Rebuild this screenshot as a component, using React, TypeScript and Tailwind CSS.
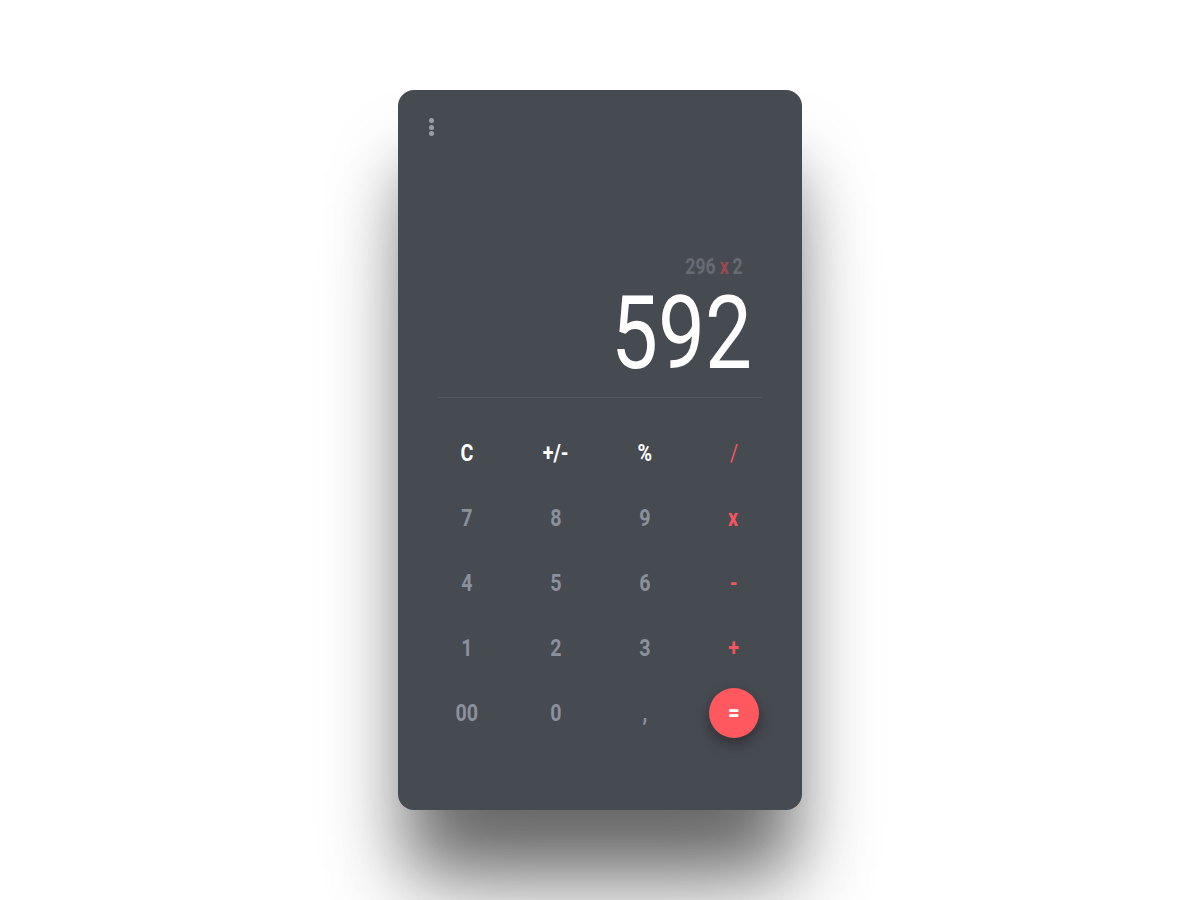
const keys = [
  { label: "C", tone: "white" },
  { label: "+/-", tone: "white" },
  { label: "%", tone: "white" },
  { label: "/", tone: "redThin" },
  { label: "7", tone: "gray" },
  { label: "8", tone: "gray" },
  { label: "9", tone: "gray" },
  { label: "x", tone: "red" },
  { label: "4", tone: "gray" },
  { label: "5", tone: "gray" },
  { label: "6", tone: "gray" },
  { label: "-", tone: "red" },
  { label: "1", tone: "gray" },
  { label: "2", tone: "gray" },
  { label: "3", tone: "gray" },
  { label: "+", tone: "red" },
  { label: "00", tone: "gray" },
  { label: "0", tone: "gray" },
  { label: ",", tone: "gray" },
  { label: "=", tone: "equals" },
];

const toneClass: Record<string, string> = {
  white: "text-white font-bold",
  gray: "text-[#8b919b] font-bold",
  red: "text-[#f5565d] font-bold",
  redThin: "text-[#f5565d] font-normal",
};

export default function App() {
  return (
    <div className="min-h-screen w-full bg-white flex items-center justify-center font-['Roboto','Liberation_Sans',sans-serif]">
      <div className="w-[404px] h-[720px] bg-[#464a51] rounded-[16px] shadow-[0_70px_70px_-10px_rgba(0,0,0,0.5),0_100px_100px_-20px_rgba(0,0,0,0.2)] flex flex-col pt-[28px]">
        <div className="pl-[31px] flex flex-col gap-[1.5px]">
          <span className="w-[5px] h-[5px] rounded-full bg-[#9a9ea5]" />
          <span className="w-[5px] h-[5px] rounded-full bg-[#9a9ea5]" />
          <span className="w-[5px] h-[5px] rounded-full bg-[#9a9ea5]" />
        </div>

        <div className="mt-[120px] flex flex-col items-end">
          <div className="mr-[59px] flex gap-[5px] text-[22px] leading-none font-bold text-[#676b72] scale-x-[0.8] origin-right">
            <span>296</span>
            <span className="text-[#9b4a50]">x</span>
            <span>2</span>
          </div>
          <div className="mt-[4px] mr-[50px] text-[102px] leading-none text-white scale-x-[0.82] origin-right">
            592
          </div>
        </div>

        <div className="mt-[13px] mx-[39px] h-px bg-[#53575e]" />

        <div className="mt-[22px] px-[24px] grid grid-cols-4">
          {keys.map((k) => (
            <div key={k.label} className="h-[65px] flex items-center justify-center">
              {k.tone === "equals" ? (
                <button className="w-[50px] h-[50px] rounded-full bg-[#ff585e] shadow-[0_6px_14px_rgba(0,0,0,0.35)] text-white text-[24px] font-bold leading-none flex items-center justify-center">
                  <span className="scale-x-[0.85]">=</span>
                </button>
              ) : (
                <span className={`text-[24px] leading-none scale-x-[0.82] ${toneClass[k.tone]}`}>{k.label}</span>
              )}
            </div>
          ))}
        </div>
      </div>
    </div>
  );
}
